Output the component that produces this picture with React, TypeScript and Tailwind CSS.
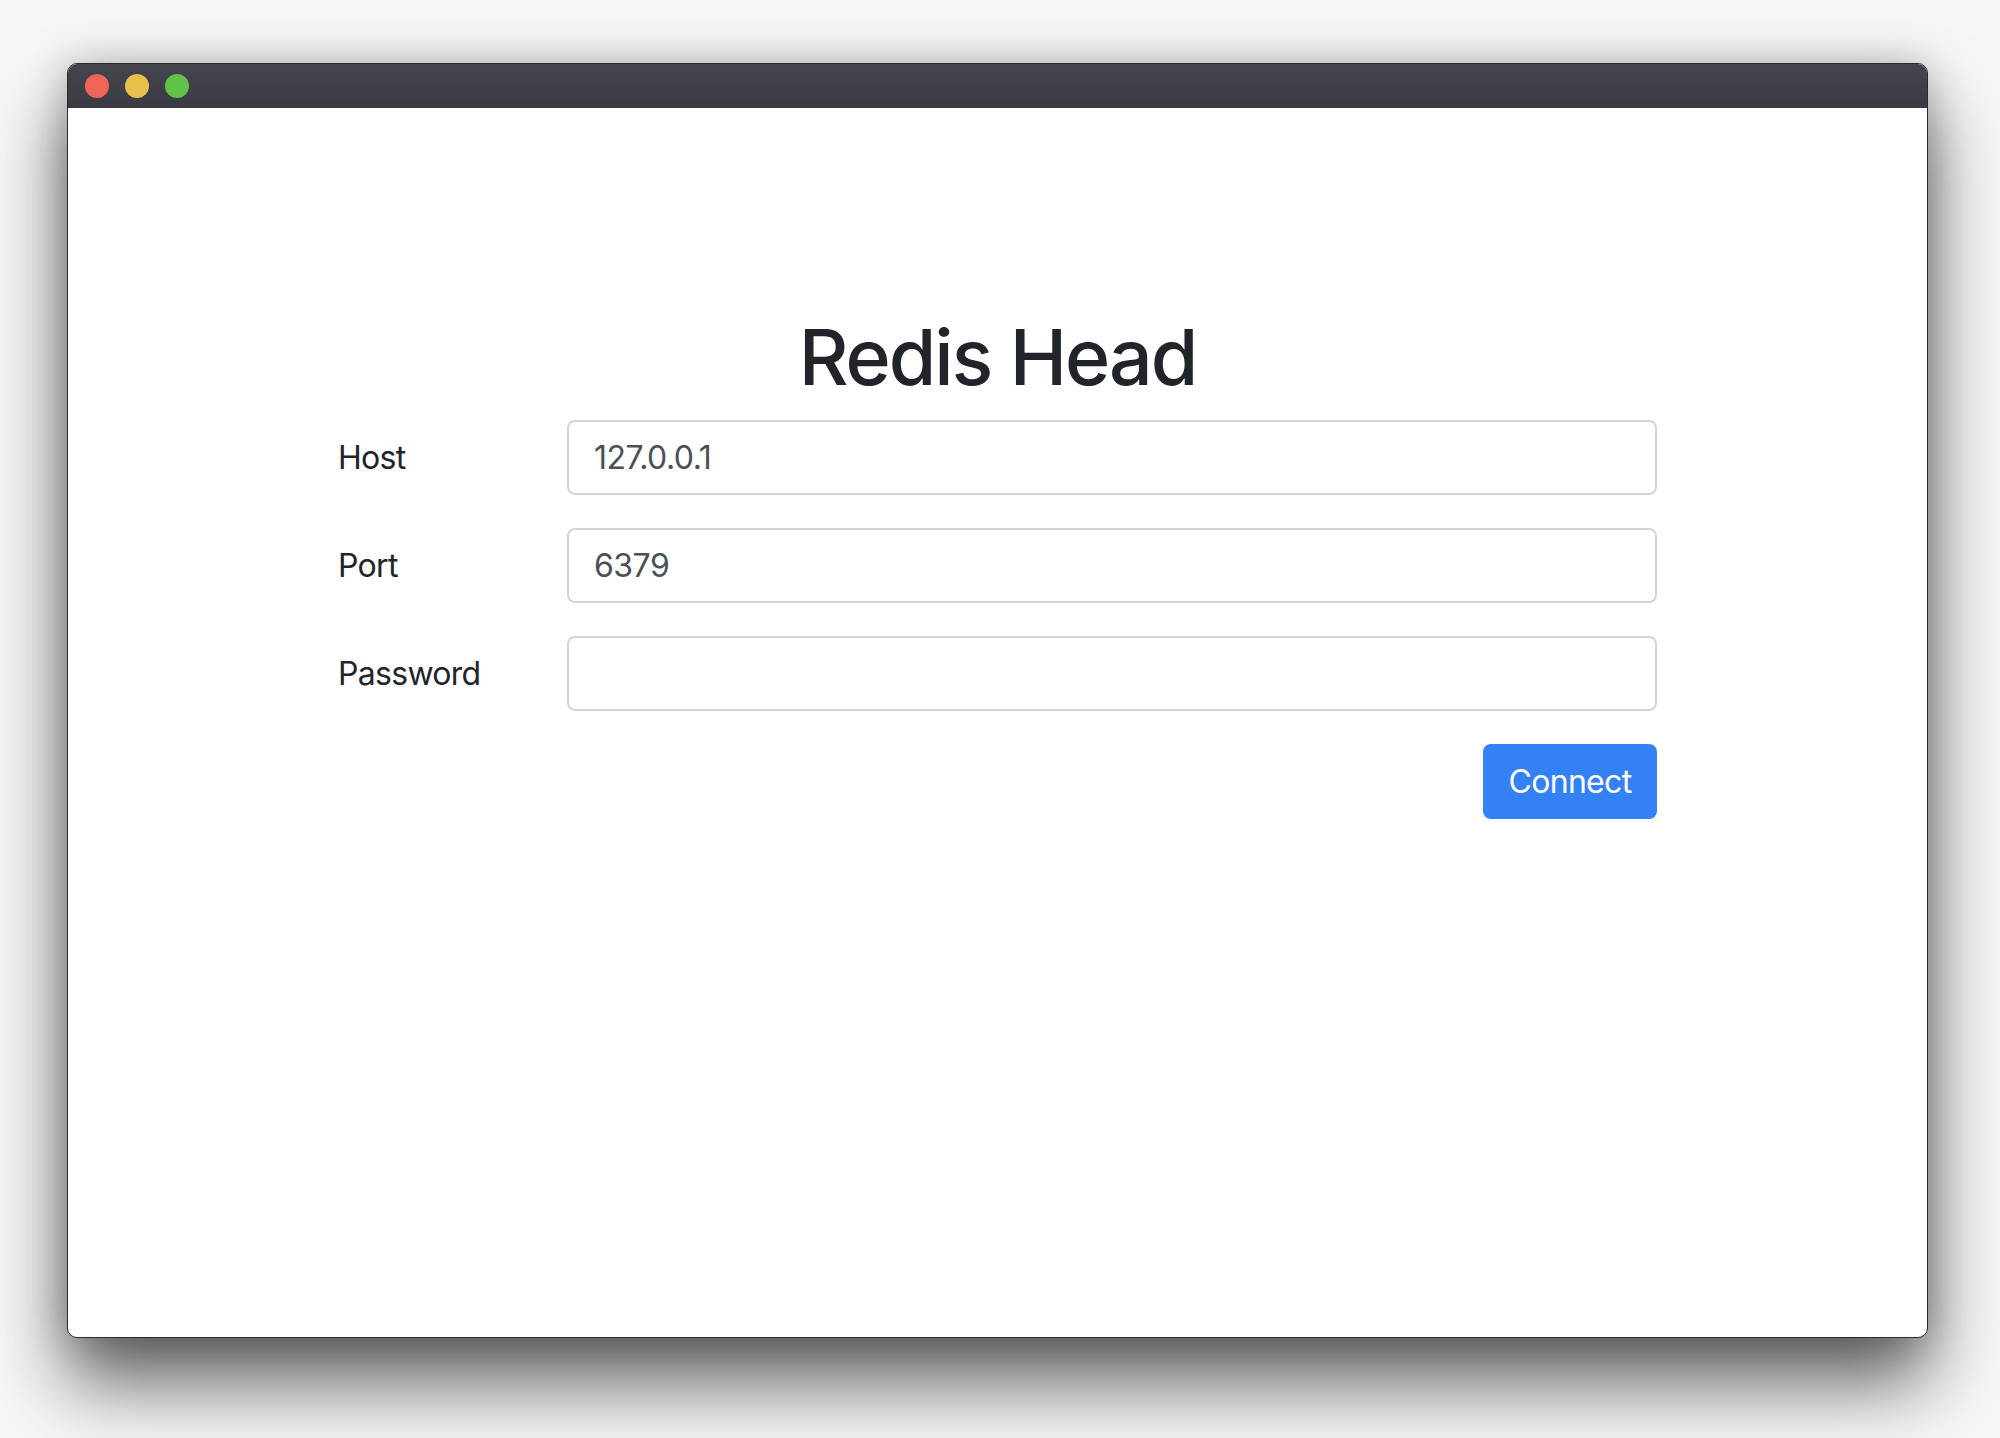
import React from 'react';

const Field: React.FC<{ label: string; value?: string; type?: string }> = ({ label, value, type }) => {
  return (
    <div className="flex items-center">
      <label className="w-[229px] shrink-0 text-[32px] tracking-[-0.7px] text-[#212529]">{label}</label>
      <input
        type={type ?? 'text'}
        defaultValue={value}
        className="w-[1090px] h-[75px] px-[25px] text-[32px] tracking-[-0.5px] text-[#495057] bg-white border-2 border-[#d1d5da] rounded-[8px] outline-none"
      />
    </div>
  );
};

const App: React.FC = () => {
  return (
    <div
      className="w-[2000px] h-[1438px] bg-[#f6f6f6] pt-[63px] pl-[67px] overflow-hidden"
      style={{ fontFamily: 'Inter, "Noto Sans", sans-serif' }}
    >
      {/* window */}
      <div className="w-[1861px] h-[1275px] flex flex-col bg-white rounded-[10px] border border-[#2a2a2e] overflow-hidden shadow-[0_45px_75px_rgba(0,0,0,0.6),0_0_40px_rgba(0,0,0,0.22)]">
        {/* title bar */}
        <div className="h-[44px] shrink-0 bg-gradient-to-b from-[#45464d] to-[#3a3b42] flex items-center gap-[16px] pl-[17px]">
          <span className="w-[24px] h-[24px] rounded-full bg-[#ee6458]" />
          <span className="w-[24px] h-[24px] rounded-full bg-[#e8bf4d]" />
          <span className="w-[24px] h-[24px] rounded-full bg-[#62c148]" />
        </div>

        {/* body */}
        <div className="flex-1 flex flex-col items-center pt-[203px]">
          <h1 className="text-[77px] leading-[93px] font-medium text-[#212529] tracking-[-2px]">Redis Head</h1>
          <div className="w-[1319px] flex flex-col gap-[33px] mt-[16px]">
            <Field label="Host" value="127.0.0.1" />
            <Field label="Port" value="6379" />
            <Field label="Password" type="password" />
            <div className="flex justify-end">
              <button className="w-[174px] h-[75px] rounded-[8px] bg-[#3381f5] text-white text-[32px] tracking-[-0.7px]">Connect</button>
            </div>
          </div>
        </div>
      </div>
    </div>
  );
};

export default App;
